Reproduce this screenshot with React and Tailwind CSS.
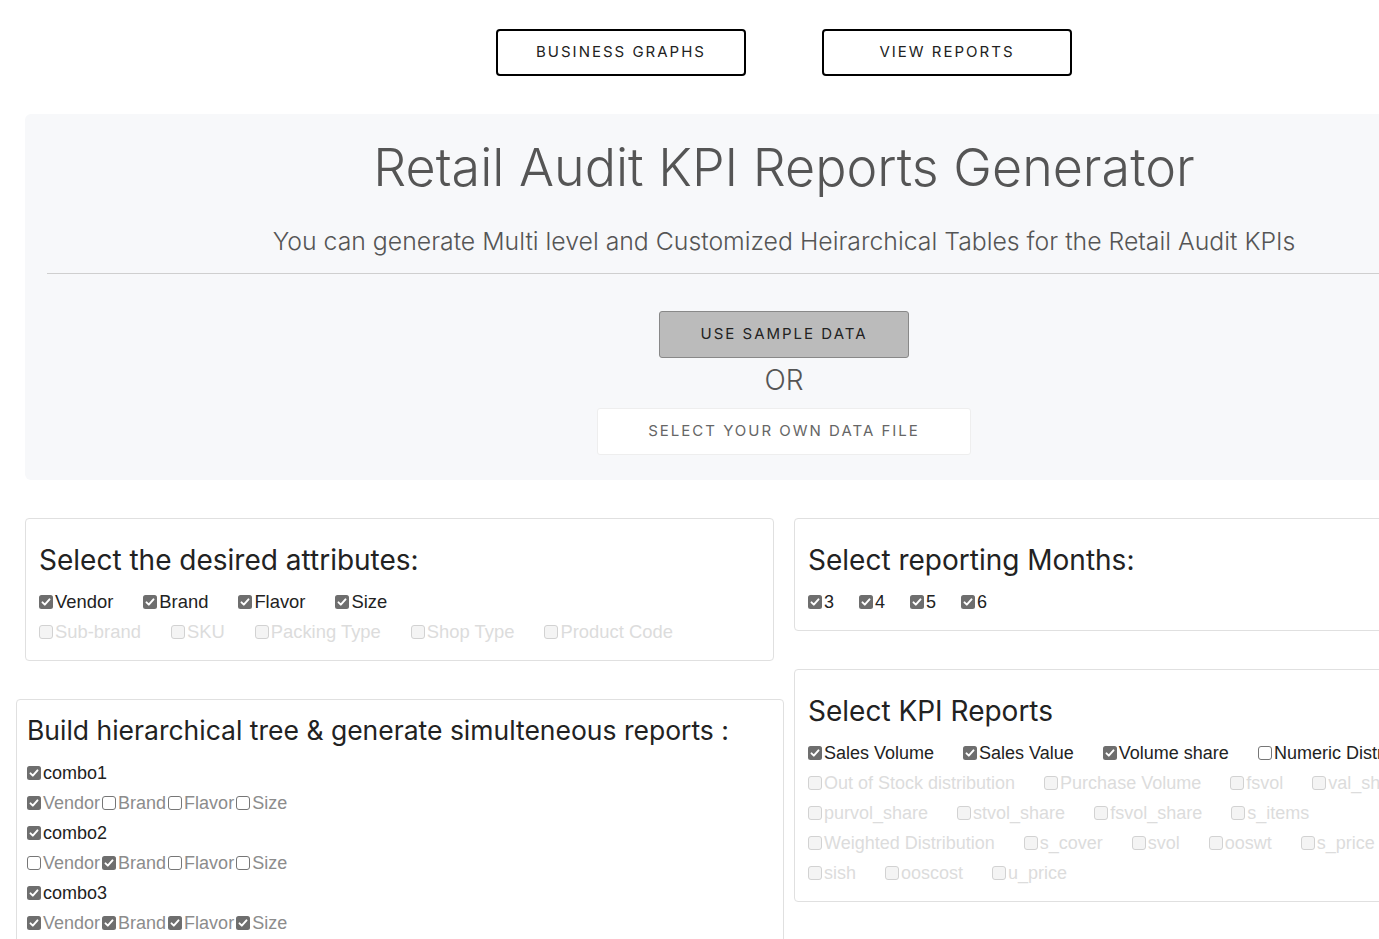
import React from "react";

const HEAD = { fontFamily: "Inter, 'Open Sans', sans-serif" };
const BODY = { fontFamily: "'Liberation Sans', Arial, sans-serif" };

function Box({ state }) {
  // state: "on" | "off" | "dim"
  if (state === "on") {
    return (
      <svg width="14" height="14" viewBox="0 0 14 14" className="shrink-0">
        <rect x="0" y="0" width="14" height="14" rx="2.5" fill="#6e6e6e" />
        <path d="M3.5 7.4 L5.8 9.6 L10.5 4.4" fill="none" stroke="#fff" strokeWidth="2" strokeLinecap="round" strokeLinejoin="round" />
      </svg>
    );
  }
  if (state === "dim") {
    return (
      <svg width="14" height="14" viewBox="0 0 14 14" className="shrink-0">
        <rect x="0.5" y="0.5" width="13" height="13" rx="2.5" fill="#f4f4f4" stroke="#d2d2d2" />
      </svg>
    );
  }
  return (
    <svg width="14" height="14" viewBox="0 0 14 14" className="shrink-0">
      <rect x="0.5" y="0.5" width="13" height="13" rx="2.5" fill="#fff" stroke="#767676" />
    </svg>
  );
}

function Check({ label, state, tone }) {
  const color =
    tone === "dim" ? "text-[#dcdcdc]" : tone === "mid" ? "text-[#8c8c8c]" : "text-[#222]";
  return (
    <span className={`flex items-center whitespace-nowrap ${color}`}>
      <Box state={state} />
      <span className="ml-[2px]">{label}</span>
    </span>
  );
}

function Row({ items, gap = "gap-[29px]", size = "text-[18px]" }) {
  return (
    <div className={`flex items-center h-[30px] ${size} ${gap}`} style={BODY}>
      {items.map((it, i) => (
        <Check key={i} {...it} />
      ))}
    </div>
  );
}

const on = (label) => ({ label, state: "on" });
const off = (label) => ({ label, state: "off" });
const dim = (label) => ({ label, state: "dim", tone: "dim" });
const mOn = (label) => ({ label, state: "on", tone: "mid" });
const mOff = (label) => ({ label, state: "off", tone: "mid" });

const kpiRows = [
  [on("Sales Volume"), on("Sales Value"), on("Volume share"), off("Numeric Distribution")],
  [dim("Out of Stock distribution"), dim("Purchase Volume"), dim("fsvol"), dim("val_share")],
  [dim("purvol_share"), dim("stvol_share"), dim("fsvol_share"), dim("s_items")],
  [dim("Weighted Distribution"), dim("s_cover"), dim("svol"), dim("ooswt"), dim("s_price")],
  [dim("sish"), dim("ooscost"), dim("u_price")],
];

function Card({ title, className, children, top = "pt-[24px]", gap = "mt-[10px]", pad = "px-[13px]", titleSize = "text-[28px]" }) {
  return (
    <div className={`border border-[#e0e0e0] rounded-[4px] bg-white ${pad} ${top} pb-[13px] ${className}`}>
      <h3 className={`${titleSize} leading-[34px] font-normal text-[#222] whitespace-nowrap`} style={HEAD}>
        {title}
      </h3>
      <div className={gap}>{children}</div>
    </div>
  );
}

export default function App() {
  return (
    <div className="w-screen min-h-screen overflow-hidden bg-white">
      <div className="w-[1568px]">
        {/* nav buttons */}
        <div className="flex justify-center gap-[76px] pt-[29px]" style={HEAD}>
          {["BUSINESS GRAPHS", "VIEW REPORTS"].map((t) => (
            <button
              key={t}
              className="w-[250px] h-[47px] border-2 border-black rounded-[4px] text-[15px] tracking-[2px] text-[#222]"
            >
              {t}
            </button>
          ))}
        </div>

        {/* jumbotron */}
        <div className="mx-[25px] mt-[38px] rounded-[6px] bg-[#f7f8fa] pt-[22px] pb-[25px] flex flex-col items-center" style={HEAD}>
          <h1 className="text-[52px] leading-[64px] font-light text-[#555]">
            Retail Audit KPI Reports Generator
          </h1>
          <p className="mt-[23px] text-[24.8px] leading-[36px] font-light text-[#555]">
            You can generate Multi level and Customized Heirarchical Tables for the Retail Audit KPIs
          </p>
          <hr className="self-stretch mx-[22px] mt-[14px] border-t border-[#cfcfcf]" />
          <button className="mt-[37px] w-[250px] h-[47px] bg-[#bbbbbb] border border-[#888] rounded-[3px] text-[15px] tracking-[2px] text-[#222]">
            USE SAMPLE DATA
          </button>
          <div className="mt-px text-[28px] leading-[42px] font-light text-[#555]">OR</div>
          <div className="mt-[7px] w-[374px] h-[47px] bg-white border border-[#eeeeee] rounded-[3px] flex items-center justify-center text-[15px] tracking-[2px] text-[#666]">
            SELECT YOUR OWN DATA FILE
          </div>
        </div>

        {/* panels */}
        <div className="grid grid-cols-2 mt-[38px]">
          <div className="flex flex-col">
            <Card title="Select the desired attributes:" className="ml-[25px] mr-[10px]">
              <Row size="text-[18.4px]" gap="gap-[30px]" items={[on("Vendor"), on("Brand"), on("Flavor"), on("Size")]} />
              <Row size="text-[18.4px]" gap="gap-[30px]" items={[dim("Sub-brand"), dim("SKU"), dim("Packing Type"), dim("Shop Type"), dim("Product Code")]} />
            </Card>
            <Card
              title="Build hierarchical tree & generate simulteneous reports :"
              className="ml-[16px] mt-[38px] h-[260px]"
              top="pt-[13px]"
              gap="mt-[11px]"
              pad="px-[10px]"
              titleSize="text-[26.5px]"
            >
              <Row items={[on("combo1")]} />
              <Row gap="gap-[2px]" items={[mOn("Vendor"), mOff("Brand"), mOff("Flavor"), mOff("Size")]} />
              <Row items={[on("combo2")]} />
              <Row gap="gap-[2px]" items={[mOff("Vendor"), mOn("Brand"), mOff("Flavor"), mOff("Size")]} />
              <Row items={[on("combo3")]} />
              <Row gap="gap-[2px]" items={[mOn("Vendor"), mOn("Brand"), mOn("Flavor"), mOn("Size")]} />
            </Card>
          </div>
          <div className="flex flex-col">
            <Card title="Select reporting Months:" className="ml-[10px] mr-[25px]">
              <Row gap="gap-[25px]" items={[on("3"), on("4"), on("5"), on("6")]} />
            </Card>
            <Card title="Select KPI Reports" className="ml-[10px] mr-[25px] mt-[38px]">
              {kpiRows.map((r, i) => (
                <Row key={i} items={r} />
              ))}
            </Card>
          </div>
        </div>
      </div>
    </div>
  );
}
